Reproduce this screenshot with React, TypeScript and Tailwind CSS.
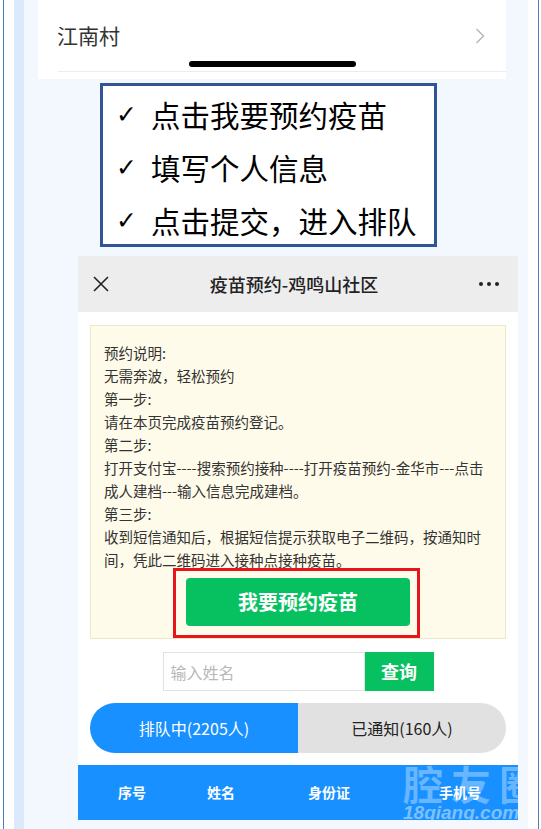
import React, {FC} from "react";

const cjk = { fontFamily: '"Noto Sans CJK SC", "Noto Sans", sans-serif' };

const steps = [
  "点击我要预约疫苗",
  "填写个人信息",
  "点击提交，进入排队",
];

const notice = [
  "预约说明:",
  "无需奔波，轻松预约",
  "第一步:",
  "请在本页完成疫苗预约登记。",
  "第二步:",
  "打开支付宝----搜索预约接种----打开疫苗预约-金华市---点击",
  "成人建档---输入信息完成建档。",
  "第三步:",
  "收到短信通知后，根据短信提示获取电子二维码，按通知时",
  "间，凭此二维码进入接种点接种疫苗。",
];

const columns = [
  { name: "序号", width: "w-[108px]" },
  { name: "姓名", width: "w-[70px]" },
  { name: "身份证", width: "w-[146px]" },
  { name: "手机号", width: "w-[116px]" },
];

const VillageCard: FC = () => (
  <div className="relative ml-[14px] w-[468px] h-[79px] bg-white flex flex-col">
    <div className="h-[71px] flex items-center justify-between pl-[19px] pr-[21px]">
      <span className="text-[21px] text-[#333]">江南村</span>
      <svg width="10" height="16" viewBox="0 0 10 16" fill="none">
        <path d="M1.5 1l7 7-7 7" stroke="#b5b5b5" strokeWidth="1.4" />
      </svg>
    </div>
    <div className="ml-[20px] h-px bg-[#ececec]" />
    <div className="absolute left-[151px] top-[61px] w-[167px] h-[6px] rounded-full bg-black" />
  </div>
);

const StepsBox: FC = () => (
  <div className="mt-[4px] ml-[76px] w-[337px] h-[164px] border-[3px] border-[#2f5597] bg-white pt-[2px] pl-[13px]">
    {steps.map(s => (
      <div key={s} className="h-[53px] flex items-center text-[29.5px] text-black leading-none">
        <span className="w-[35px] text-[25px] font-bold" style={{ fontFamily: '"DejaVu Sans", sans-serif' }}>✓</span>
        <span>{s}</span>
      </div>
    ))}
  </div>
);

const Phone: FC = () => (
  <div className="mt-[9px] ml-[54px] w-[440px] bg-white flex flex-col">
    <div className="h-[56px] bg-[#ededed] flex items-center justify-between px-[15px]">
      <svg width="16" height="16" viewBox="0 0 16 16">
        <path d="M1 1l14 14M15 1L1 15" stroke="#222" strokeWidth="1.6" />
      </svg>
      <span className="text-[18px] font-medium text-[#222]">疫苗预约-鸡鸣山社区</span>
      <div className="flex gap-[4px] pr-[4px]">
        <span className="w-[4px] h-[4px] rounded-full bg-[#222]" />
        <span className="w-[4px] h-[4px] rounded-full bg-[#222]" />
        <span className="w-[4px] h-[4px] rounded-full bg-[#222]" />
      </div>
    </div>

    <div className="mx-[12px] mt-[13px] border border-[#eee8c8] bg-[#fffbea] pl-[13px] pt-[15px] pb-[12px]">
      {notice.map(line => (
        <div key={line} className="h-[23px] leading-[23px] text-[14.5px] text-[#333] whitespace-nowrap">{line}</div>
      ))}
      <div className="flex justify-center mt-[7px] -ml-[13px]">
        <div className="relative">
          <div className="absolute -left-[13px] -right-[10px] -top-[10px] -bottom-[12px] border-[3px] border-[#e8141b]" />
          <div className="w-[224px] h-[48px] rounded-[4px] bg-[#07c160] flex items-center justify-center text-white text-[20px] font-bold">
            我要预约疫苗
          </div>
        </div>
      </div>
    </div>

    <div className="mt-[13px] flex justify-center">
      <div className="w-[202px] h-[39px] border border-[#e2e2e2] flex items-center pl-[7px] text-[16px] text-[#b8b8b8]">
        输入姓名
      </div>
      <div className="w-[69px] h-[39px] bg-[#07c160] flex items-center justify-center text-white text-[18px] font-bold">
        查询
      </div>
    </div>

    <div className="mt-[12px] mx-[12px] h-[50px] rounded-full overflow-hidden flex text-[16px]">
      <div className="w-[208px] bg-[#1890ff] text-white flex items-center justify-center">排队中(2205人)</div>
      <div className="flex-1 bg-[#e1e1e1] text-[#222] flex items-center justify-center">已通知(160人)</div>
    </div>

    <div className="relative mt-[12px] h-[55px] bg-[#1890ff] overflow-hidden">
      <div className="absolute left-[325px] top-[-4px] flex flex-col items-start whitespace-nowrap pointer-events-none">
        <span className="text-[40px] font-bold tracking-[8px] leading-[44px] text-white/35">腔友圈</span>
        <span className="-mt-[2px] text-[19px] font-bold italic leading-none text-white/45" style={{ fontFamily: '"Liberation Sans", sans-serif' }}>18qiang.com</span>
      </div>
      <div className="relative h-full flex items-center text-white text-[14px] font-bold">
        {columns.map(c => (
          <div key={c.name} className={`${c.width} text-center`}>{c.name}</div>
        ))}
      </div>
    </div>
  </div>
);

export default function App() {
  return (
    <div className="relative w-[541px] h-[829px] overflow-hidden bg-white flex" style={cjk}>
      <div className="w-[3px]" />
      <div className="w-px bg-[#4a7ebb]" />
      <div className="w-[10px]" />
      <div className="w-[10px] bg-[#dce9fb]" />
      <div className="w-[504px] bg-[#f3f7fe] flex flex-col">
        <VillageCard />
        <StepsBox />
        <Phone />
      </div>
      <div className="w-[10px]" />
      <div className="w-px bg-[#4a7ebb]" />
      <div className="flex-1" />
    </div>
  );
}
